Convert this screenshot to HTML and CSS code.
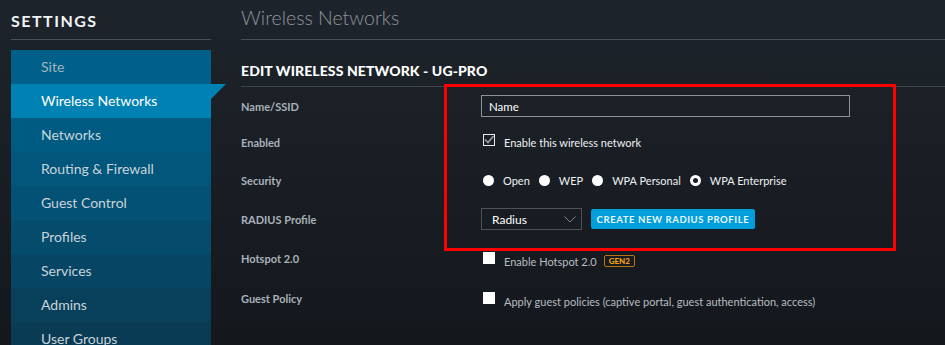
FILE: index.html
```html
<!DOCTYPE html>
<html>
<head>
  <title>Settings - Wireless Networks</title>
  <meta charset="UTF-8" />
  <link rel="stylesheet" href="styles.css">
</head>
<body>
  <div class="layout">
    <aside class="sidebar">
      <div class="side-title">SETTINGS</div>
      <ul class="menu">
        <li class="dim">Site</li>
        <li class="active">Wireless Networks</li>
        <li>Networks</li>
        <li>Routing &amp; Firewall</li>
        <li>Guest Control</li>
        <li>Profiles</li>
        <li>Services</li>
        <li>Admins</li>
        <li>User Groups</li>
      </ul>
    </aside>

    <main class="main">
      <h1 class="page-title">Wireless Networks</h1>
      <h2 class="section-title">EDIT WIRELESS NETWORK - UG-PRO</h2>

      <div class="form">
        <div class="row row-name">
          <div class="label">Name/SSID</div>
          <div class="control"><div class="input">Name</div></div>
        </div>
        <div class="row row-enabled">
          <div class="label">Enabled</div>
          <div class="control">
            <span class="check checked">
              <svg width="10" height="9" viewBox="0 0 10 9"><path d="M1 4.5 L4 7.5 L9.5 1" fill="none" stroke="#9aa0a6" stroke-width="1.6"/></svg>
            </span>
            <span class="text">Enable this wireless network</span>
          </div>
        </div>
        <div class="row row-security">
          <div class="label">Security</div>
          <div class="control radios">
            <span class="radio"></span><span class="text">Open</span>
            <span class="radio"></span><span class="text">WEP</span>
            <span class="radio"></span><span class="text">WPA Personal</span>
            <span class="radio on"></span><span class="text">WPA Enterprise</span>
          </div>
        </div>
        <div class="row row-radius">
          <div class="label">RADIUS Profile</div>
          <div class="control">
            <div class="select">
              <span>Radius</span>
              <svg width="12" height="7" viewBox="0 0 12 7"><path d="M0.5 0.5 L6 6 L11.5 0.5" fill="none" stroke="#7d848b" stroke-width="1"/></svg>
            </div>
            <button class="btn">CREATE NEW RADIUS PROFILE</button>
          </div>
        </div>
        <div class="row row-hotspot">
          <div class="label">Hotspot 2.0</div>
          <div class="control">
            <span class="check"></span>
            <span class="text muted">Enable Hotspot 2.0</span>
            <span class="badge">GEN2</span>
          </div>
        </div>
        <div class="row row-guest">
          <div class="label">Guest Policy</div>
          <div class="control">
            <span class="check"></span>
            <span class="text muted">Apply guest policies (captive portal, guest authentication, access)</span>
          </div>
        </div>
      </div>
    </main>
  </div>

  <div class="highlight"></div>
</body>
</html>
```

FILE: styles.css
```css
html, body {
  margin: 0;
  height: 100%;
}
body {
  font-family: Lato, "Open Sans", sans-serif;
  background: linear-gradient(#1e242b, #14181d);
  color: #e6e9ec;
  overflow: hidden;
}
.layout {
  display: flex;
  padding-left: 11px;
}

/* sidebar */
.sidebar {
  width: 200px;
  flex-shrink: 0;
}
.side-title {
  height: 40px;
  box-sizing: border-box;
  padding-top: 11px;
  border-bottom: 1px solid #4a5058;
  font-size: 16px;
  font-weight: 700;
  letter-spacing: 1.5px;
  color: #f2f4f6;
}
.menu {
  list-style: none;
  margin: 10px 0 0;
  padding: 0;
}
.menu li {
  position: relative;
  height: 34px;
  line-height: 33px;
  padding-left: 30px;
  font-size: 14px;
  color: #c9d3da;
}
.menu li:nth-child(1) { background: #016089; }
.menu li:nth-child(3) { background: #005b82; }
.menu li:nth-child(4) { background: #02567b; }
.menu li:nth-child(5) { background: #035174; }
.menu li:nth-child(6) { background: #044b6c; }
.menu li:nth-child(7) { background: #064664; }
.menu li:nth-child(8) { background: #08405c; }
.menu li:nth-child(9) { background: #0a3b54; }
.menu li.dim { color: #a3b5c0; }
.menu li.active {
  background: #0081b3;
  color: #ffffff;
}
.menu li.active::after {
  content: "";
  position: absolute;
  left: 200px;
  top: 0;
  border-top: 15px solid #0081b3;
  border-right: 15px solid transparent;
}

/* main */
.main {
  flex: 1;
  margin-left: 30px;
}
.page-title {
  margin: 0;
  height: 40px;
  box-sizing: border-box;
  padding-top: 6px;
  border-bottom: 1px solid #4a5058;
  font-size: 19.5px;
  font-weight: 300;
  color: #8d969e;
}
.section-title {
  margin: 0;
  height: 47px;
  box-sizing: border-box;
  padding-top: 22px;
  border-bottom: 1px solid #3f454d;
  font-size: 14px;
  font-weight: 900;
  letter-spacing: 0.1px;
  color: #ffffff;
}

.form {
  padding-top: 8px;
}
.row {
  display: flex;
  align-items: center;
  height: 22px;
}
.row-enabled { margin-top: 14px; }
.row-security { margin-top: 16px; }
.row-radius { margin-top: 17px; }
.row-hotspot { margin-top: 19px; }
.row-guest { margin-top: 18px; }
.row-hotspot .label,
.row-guest .label { margin-top: -3px; }
.label {
  width: 240px;
  flex-shrink: 0;
  font-size: 11px;
  font-weight: 700;
  color: #a9b1b9;
}
.control {
  display: flex;
  align-items: center;
  font-size: 11px;
}
.input {
  width: 369px;
  height: 22px;
  box-sizing: border-box;
  border: 1px solid #8d9297;
  padding: 4px 7px 0;
  font-size: 11.5px;
  color: #ffffff;
}
.check {
  width: 10px;
  height: 10px;
  margin-left: 2px;
  margin-right: 9px;
  background: #ffffff;
  border: 1px solid #ffffff;
  display: flex;
  align-items: center;
  justify-content: center;
}
.check.checked {
  background: transparent;
  border-color: #e8eaec;
  margin-top: -5px;
}
.row-hotspot .check,
.row-guest .check { margin-top: -4px; }
.text { color: #eef0f2; }
.text.muted { color: #b7bdc3; margin-top: 2px; }
.radio {
  width: 11px;
  height: 11px;
  border-radius: 50%;
  background: #ffffff;
  margin-left: 2px;
  margin-right: 9px;
  box-sizing: border-box;
}
.radio.on {
  background: transparent;
  border: 3px solid #ffffff;
}
.radios .text { margin-right: 7px; }
.select {
  width: 101px;
  height: 22px;
  box-sizing: border-box;
  border: 1px solid #4c5259;
  display: flex;
  align-items: center;
  justify-content: space-between;
  padding: 0 5px 0 10px;
  font-size: 12px;
  color: #ffffff;
}
.btn {
  margin-left: 9px;
  height: 20px;
  width: 164px;
  border: none;
  border-radius: 2px;
  background: #009fdb;
  color: #e8f6fc;
  font-family: Lato, sans-serif;
  font-size: 9.5px;
  font-weight: 700;
  letter-spacing: 0.6px;
  padding: 0;
}
.badge {
  margin-left: 7px;
  margin-top: 2px;
  padding: 0 4px;
  height: 10px;
  line-height: 10px;
  border: 1px solid #b8740e;
  border-radius: 2px;
  font-size: 8px;
  font-weight: 900;
  color: #f0a010;
}

/* annotation box */
.highlight {
  position: absolute;
  left: 444px;
  top: 84px;
  width: 446px;
  height: 161px;
  border: 3px solid #ff0000;
}
```
